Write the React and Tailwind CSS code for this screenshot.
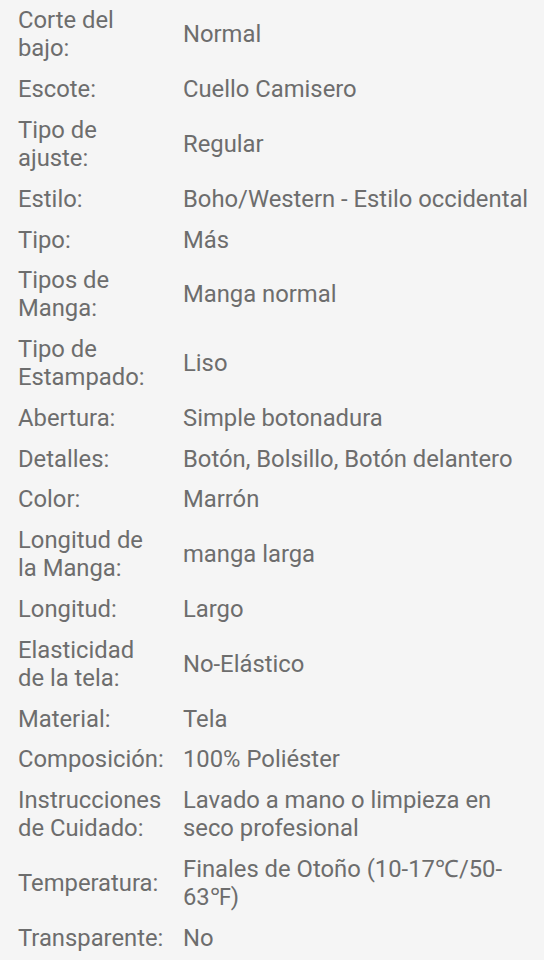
const specs = [
  ["Corte del\nbajo:", "Normal"],
  ["Escote:", "Cuello Camisero"],
  ["Tipo de\najuste:", "Regular"],
  ["Estilo:", "Boho/Western - Estilo occidental"],
  ["Tipo:", "Más"],
  ["Tipos de\nManga:", "Manga normal"],
  ["Tipo de\nEstampado:", "Liso"],
  ["Abertura:", "Simple botonadura"],
  ["Detalles:", "Botón, Bolsillo, Botón delantero"],
  ["Color:", "Marrón"],
  ["Longitud de\nla Manga:", "manga larga"],
  ["Longitud:", "Largo"],
  ["Elasticidad\nde la tela:", "No-Elástico"],
  ["Material:", "Tela"],
  ["Composición:", "100% Poliéster"],
  ["Instrucciones\nde Cuidado:", "Lavado a mano o limpieza en\nseco profesional"],
  ["Temperatura:", "Finales de Otoño (10-17℃/50-\n63℉)"],
  ["Transparente:", "No"],
];

export default function App() {
  return (
    <div
      className="min-h-[960px] bg-[#f5f5f5] pl-[18px] pr-[8px] text-[23.8px] leading-[28px] text-[#6d6d6d]"
      style={{ fontFamily: "Roboto, 'Liberation Sans', sans-serif" }}
    >
      {specs.map(([label, value]) => (
        <div key={label} className="flex items-center py-[6.4px]">
          <div className="w-[165px] shrink-0 whitespace-pre-line">{label}</div>
          <div className="flex-1 whitespace-pre-line">{value}</div>
        </div>
      ))}
    </div>
  );
}
